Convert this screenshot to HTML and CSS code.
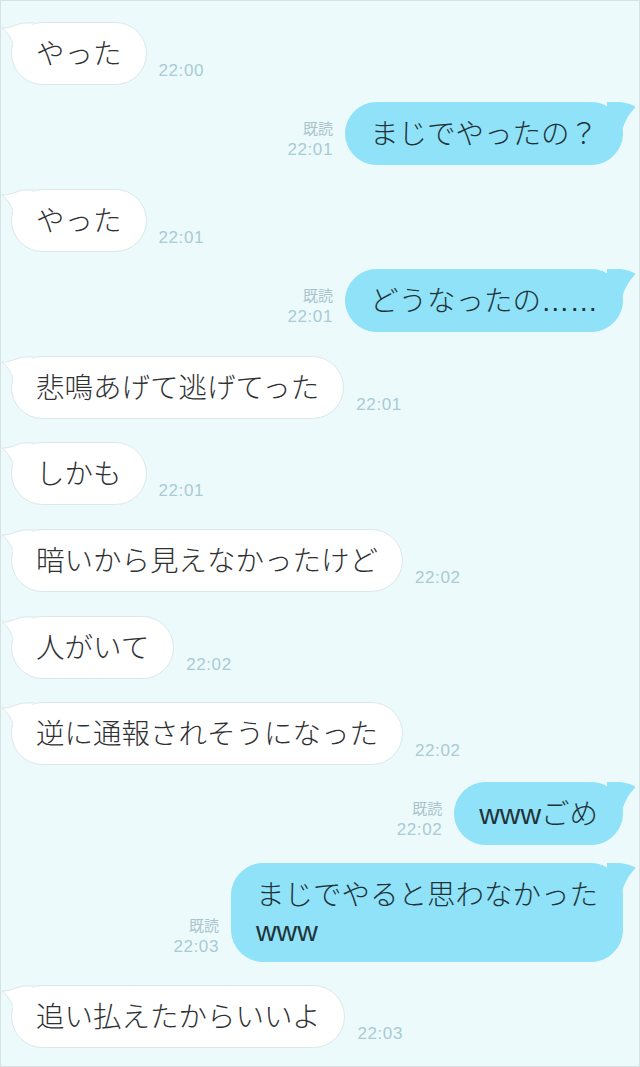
FILE: index.html
```html
<!DOCTYPE html>
<html lang="ja">
<head>
    <meta charset="UTF-8">
    <meta name="viewport" content="width=device-width, initial-scale=1.0">
    <title>トーク</title>
    <link rel="stylesheet" href="styles.css">
</head>
<body>
    <svg class="defs" width="0" height="0" aria-hidden="true">
        <symbol id="tail-in" viewBox="0 0 40 30">
            <path d="M2 6 C8 6.5 14 3.5 22 1.2 L34 1 L20 14 L14 24 C10 14 6 9 2 6 Z" fill="#fff"/>
            <path d="M2 6 C8 6.5 14 3.5 22 1.2 L34 0.8" fill="none" stroke="#dbe7ea" stroke-width="1"/>
            <path d="M2 6 C6 9 10 14 12.6 21" fill="none" stroke="#dbe7ea" stroke-width="1"/>
        </symbol>
        <symbol id="tail-out" viewBox="0 0 30 30">
            <path d="M0 0 L12 0 C20 0.5 25 2.5 28.5 5 C24 10 19 16 15.5 27 L0 27 Z" fill="#8fe2f7"/>
        </symbol>
    </svg>

    <div class="chat">
        <div class="row in">
            <div class="bubble"><svg class="tail"><use href="#tail-in"/></svg>やった</div>
            <div class="meta"><span class="time">22:00</span></div>
        </div>

        <div class="row out">
            <div class="meta"><span class="read">既読</span><span class="time">22:01</span></div>
            <div class="bubble"><svg class="tail"><use href="#tail-out"/></svg>まじでやったの？</div>
        </div>

        <div class="row in">
            <div class="bubble"><svg class="tail"><use href="#tail-in"/></svg>やった</div>
            <div class="meta"><span class="time">22:01</span></div>
        </div>

        <div class="row out">
            <div class="meta"><span class="read">既読</span><span class="time">22:01</span></div>
            <div class="bubble"><svg class="tail"><use href="#tail-out"/></svg>どうなったの……</div>
        </div>

        <div class="row in">
            <div class="bubble"><svg class="tail"><use href="#tail-in"/></svg>悲鳴あげて逃げてった</div>
            <div class="meta"><span class="time">22:01</span></div>
        </div>

        <div class="row in">
            <div class="bubble"><svg class="tail"><use href="#tail-in"/></svg>しかも</div>
            <div class="meta"><span class="time">22:01</span></div>
        </div>

        <div class="row in">
            <div class="bubble"><svg class="tail"><use href="#tail-in"/></svg>暗いから見えなかったけど</div>
            <div class="meta"><span class="time">22:02</span></div>
        </div>

        <div class="row in">
            <div class="bubble"><svg class="tail"><use href="#tail-in"/></svg>人がいて</div>
            <div class="meta"><span class="time">22:02</span></div>
        </div>

        <div class="row in">
            <div class="bubble"><svg class="tail"><use href="#tail-in"/></svg>逆に通報されそうになった</div>
            <div class="meta"><span class="time">22:02</span></div>
        </div>

        <div class="row out">
            <div class="meta"><span class="read">既読</span><span class="time">22:02</span></div>
            <div class="bubble"><svg class="tail"><use href="#tail-out"/></svg>wwwごめ</div>
        </div>

        <div class="row out">
            <div class="meta"><span class="read">既読</span><span class="time">22:03</span></div>
            <div class="bubble"><svg class="tail"><use href="#tail-out"/></svg>まじでやると思わなかった<br>www</div>
        </div>

        <div class="row in">
            <div class="bubble"><svg class="tail"><use href="#tail-in"/></svg>追い払えたからいいよ</div>
            <div class="meta"><span class="time">22:03</span></div>
        </div>
    </div>
</body>
</html>
```

FILE: styles.css
```css
* {
    box-sizing: border-box;
    margin: 0;
    padding: 0;
}

body {
    background: #edfafc;
    font-family: "Liberation Sans", "Noto Sans CJK JP", sans-serif;
}

.defs {
    position: absolute;
    width: 0;
    height: 0;
}

.chat {
    height: 1067px;
    border: 1px solid #d6e1e4;
    padding-top: 21px;
    display: flex;
    flex-direction: column;
    overflow: hidden;
}

.row {
    display: flex;
    align-items: flex-end;
}

.row.in {
    margin-top: 23.6px;
    padding-left: 10px;
}

.row.out {
    margin-top: 17.3px;
    justify-content: flex-end;
    padding-right: 16px;
}

.row:first-child {
    margin-top: 0;
}

.bubble {
    position: relative;
    height: auto;
    font-size: 28.5px;
    font-weight: 300;
    line-height: 36px;
    padding: 13px 24px 12px;
    border-radius: 32px;
    white-space: nowrap;
}

.in .bubble {
    background: #fff;
    border: 1px solid #dbe7ea;
    color: #2f3133;
}

.out .bubble {
    background: #8fe2f7;
    border: 1px solid #8fe2f7;
    color: #223239;
}

/* tails sit over the bubble corner */
.tail {
    position: absolute;
    top: -1px;
    pointer-events: none;
}

.in .tail {
    left: -12px;
    width: 40px;
    height: 30px;
}

.out .tail {
    right: -15px;
    width: 30px;
    height: 30px;
}

.meta {
    display: flex;
    flex-direction: column;
    margin: 0 12px 4px;
    color: #a8cbd4;
    font-size: 17px;
    line-height: 21px;
}

.out .meta {
    align-items: flex-end;
    margin-bottom: 5px;
}

.time {
    letter-spacing: 0.6px;
}

.read {
    font-size: 15px;
    color: #a9c4cc;
}
```
